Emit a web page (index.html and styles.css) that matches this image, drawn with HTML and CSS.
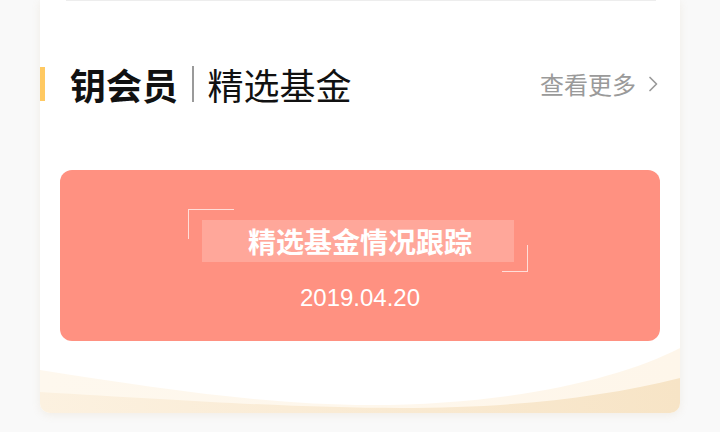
FILE: index.html
```html
<!DOCTYPE html>
<html lang="zh-CN">
<head>
<meta charset="utf-8">
<title>钥会员 精选基金</title>
<link rel="stylesheet" href="styles.css">
</head>
<body>
<div class="page">
  <div class="card">
    <div class="divider"></div>
    <div class="head">
      <div class="head-left">
        <span class="bar"></span>
        <span class="brand">钥会员</span>
        <span class="sep"></span>
        <span class="sub">精选基金</span>
      </div>
      <a class="more">
        <span>查看更多</span>
        <svg class="chev" width="12" height="18" viewBox="0 0 12 18"><polyline points="3,2.5 9.5,9 3,15.5" fill="none" stroke="#9a9a9a" stroke-width="1.7" stroke-linecap="round" stroke-linejoin="round"/></svg>
      </a>
    </div>
    <div class="banner">
      <div class="banner-title">精选基金情况跟踪</div>
      <div class="banner-date">2019.04.20</div>
    </div>
    <svg class="wave" width="640" height="70" viewBox="0 0 640 70" preserveAspectRatio="none">
      <defs>
        <linearGradient id="g1" x1="0" y1="0" x2="1" y2="0">
          <stop offset="0" stop-color="#fef8ee"/>
          <stop offset="1" stop-color="#fef6ea"/>
        </linearGradient>
        <linearGradient id="g2" x1="0" y1="0" x2="1" y2="0">
          <stop offset="0" stop-color="#fcf1e0"/>
          <stop offset="1" stop-color="#f7e4c6"/>
        </linearGradient>
      </defs>
      <path d="M0,27 C120,46 230,62 330,62 C470,62 580,36 640,5 L640,70 L0,70 Z" fill="url(#g1)"/>
      <path d="M0,49 C150,58 260,65 360,65 C470,65 560,55 640,35 L640,70 L0,70 Z" fill="url(#g2)"/>
    </svg>
  </div>
</div>
</body>
</html>
```
FILE: styles.css
```css
html, body {
  margin: 0;
  padding: 0;
  background: #f9f9f9;
  font-family: "Noto Sans CJK SC", "Noto Sans", sans-serif;
}
.page {
  width: 720px;
  height: 432px;
  padding: 0 40px;
  box-sizing: border-box;
  overflow: hidden;
}
.card {
  width: 640px;
  background: #ffffff;
  border-radius: 0 0 10px 10px;
  overflow: hidden;
  box-shadow: 0 2px 8px rgba(190, 160, 120, 0.14);
  display: flex;
  flex-direction: column;
}
.divider {
  height: 1px;
  margin: 0 24px 0 26px;
  background: #ededed;
}
.head {
  margin-top: 65px;
  height: 36px;
  display: flex;
  align-items: center;
  justify-content: space-between;
  padding-right: 21px;
}
.head-left {
  display: flex;
  align-items: center;
  height: 36px;
}
.bar {
  width: 5px;
  height: 34px;
  background: #ffc962;
}
.brand {
  margin-left: 25px;
  font-size: 36px;
  line-height: 36px;
  font-weight: 700;
  color: #111;
}
.sep {
  width: 1.5px;
  height: 36px;
  margin: 0 14px;
  background: #9a9a9a;
}
.sub {
  font-size: 36px;
  line-height: 36px;
  font-weight: 400;
  color: #111;
}
.more {
  display: flex;
  align-items: center;
  color: #9a9a9a;
  font-size: 24px;
  line-height: 24px;
}
.chev {
  margin-left: 11px;
  display: block;
}
.banner {
  margin: 68px 20px 0;
  height: 171px;
  box-sizing: border-box;
  padding-top: 50px;
  border-radius: 12px;
  background: #ff9181;
  display: flex;
  flex-direction: column;
  align-items: center;
}
.banner-title {
  position: relative;
  width: 312px;
  height: 42px;
  margin-right: 4px;
  padding-left: 4px;
  box-sizing: border-box;
  background: rgba(255, 255, 255, 0.2);
  color: #fff;
  font-size: 28px;
  line-height: 42px;
  font-weight: 600;
  text-align: center;
}
.banner-title::before {
  content: "";
  position: absolute;
  left: -14px;
  top: -11px;
  width: 45px;
  height: 29px;
  border-top: 1px solid rgba(255, 255, 255, 0.7);
  border-left: 1px solid rgba(255, 255, 255, 0.7);
}
.banner-title::after {
  content: "";
  position: absolute;
  right: -14px;
  bottom: -10px;
  width: 25px;
  height: 26px;
  border-right: 1px solid rgba(255, 255, 255, 0.7);
  border-bottom: 1px solid rgba(255, 255, 255, 0.7);
}
.banner-date {
  margin-top: 24px;
  font-family: "Liberation Sans", Arial, sans-serif;
  font-size: 24px;
  line-height: 24px;
  color: #fff;
}
.wave {
  display: block;
  margin-top: 2px;
  width: 640px;
  height: 70px;
}
```
